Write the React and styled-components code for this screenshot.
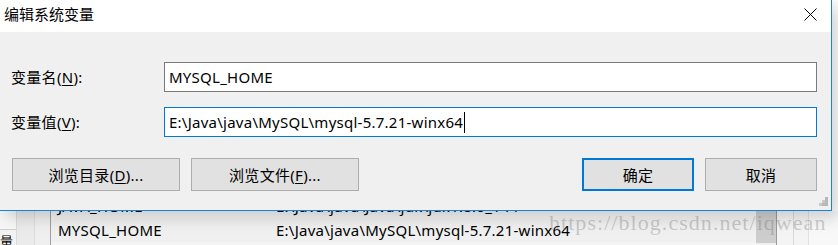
import React from 'react';
import styled, { createGlobalStyle } from 'styled-components';

const GlobalStyle = createGlobalStyle`
  html, body {
    margin: 0;
    padding: 0;
    background: #ffffff;
    overflow: hidden;
  }
`;

const uiFont = `"Noto Sans", "Noto Sans CJK SC", sans-serif`;

const Screen = styled.div`
  width: 838px;
  height: 245px;
  overflow: hidden;
  display: flex;
  flex-direction: column;
  position: relative;
  font-family: ${uiFont};
  color: #000;
`;

const Dialog = styled.div`
  width: 832px;
  height: 211px;
  flex: none;
  display: flex;
  flex-direction: column;
  border-right: 1px solid #1883d7;
  border-bottom: 1px solid #1883d7;
  box-sizing: border-box;
  position: relative;
  z-index: 2;
  box-shadow: 6px 6px 16px rgba(0, 0, 0, 0.18);
`;

const TitleBar = styled.div`
  height: 32px;
  flex: none;
  background: #ffffff;
  display: flex;
  align-items: center;
  justify-content: space-between;
  padding: 0 14px 4px 4px;
  box-sizing: border-box;
`;

const Title = styled.span`
  font-size: 15px;
  line-height: 20px;
`;

const CloseIcon = styled.svg`
  width: 13px;
  height: 13px;
  display: block;
`;

const Body = styled.div`
  flex: 1;
  background: #f0f0f0;
  padding: 30px 14px 0 11px;
  display: flex;
  flex-direction: column;
`;

const Fields = styled.div`
  display: grid;
  grid-template-columns: 153px 1fr;
  row-gap: 15px;
  align-items: center;
`;

const Label = styled.label`
  font-size: 15px;
  line-height: 20px;
  letter-spacing: 0.3px;
  & u {
    text-decoration-thickness: 1px;
    text-underline-offset: 2px;
  }
`;

const Input = styled.div`
  height: 30px;
  box-sizing: border-box;
  background: #ffffff;
  border: 1px solid ${(p) => (p.$focused ? '#0078d7' : '#7a7a7a')};
  padding: 0 4px;
  display: flex;
  align-items: center;
  font-size: 15px;
  letter-spacing: 0.25px;
  white-space: nowrap;
`;

const Caret = styled.span`
  display: inline-block;
  width: 0;
  height: 21px;
  border-left: 1px solid #000;
  margin-left: 1px;
`;

const ButtonRow = styled.div`
  margin-top: 21px;
  padding-left: 1px;
  display: flex;
  gap: 11px;
`;

const Spacer = styled.div`
  flex: 1;
`;

const Button = styled.button`
  width: ${(p) => p.$w}px;
  height: 33px;
  box-sizing: border-box;
  background: #e1e1e1;
  border: ${(p) => (p.$default ? '2px solid #0078d7' : '1px solid #adadad')};
  font-family: ${uiFont};
  font-size: 15px;
  letter-spacing: 0.3px;
  color: #000;
  padding: 0;
  display: flex;
  align-items: center;
  justify-content: center;
  & u {
    text-decoration-thickness: 1px;
    text-underline-offset: 2px;
  }
`;

const Grip = styled.svg`
  position: absolute;
  right: 3px;
  bottom: 4px;
  width: 9px;
  height: 9px;
`;

/* the window behind the dialog */
const Behind = styled.div`
  flex: 1;
  min-height: 0;
  display: flex;
  position: relative;
  background: #ffffff;
`;

const LeftPane = styled.div`
  width: 50px;
  flex: none;
  display: grid;
  grid-template-columns: 17px 18px 15px;
  border-right: 1px solid #a0a0a0;
`;

const PaneCol = styled.div`
  background: ${(p) => p.$bg};
  border-right: 1px solid ${(p) => p.$line || 'transparent'};
  display: flex;
  flex-direction: column;
  overflow: hidden;
`;

const TabBox = styled.div`
  height: 18px;
  flex: none;
  background: #f7f7f7;
  border-bottom: 1px solid #cfcfcf;
`;

const TabText = styled.div`
  font-size: 13px;
  line-height: 13px;
  margin-top: 5px;
  white-space: nowrap;
`;

const List = styled.div`
  flex: 1;
  display: flex;
  flex-direction: column;
  justify-content: flex-end;
  overflow: hidden;
  background: #f4f4f4;
  padding-bottom: 3px;
`;

const Row = styled.div`
  height: 24px;
  flex: none;
  display: grid;
  grid-template-columns: 218px 1fr;
  align-items: center;
  font-size: 15px;
  letter-spacing: 0.25px;
  padding-left: 7px;
  white-space: nowrap;
  background: ${(p) => (p.$alt ? '#f0f0f0' : 'transparent')};
`;

const Scrollbar = styled.div`
  width: 20px;
  flex: none;
  background: #f0f0f0;
  padding-bottom: 2px;
  display: flex;
`;

const Thumb = styled.div`
  flex: 1;
  background: #cdcdcd;
`;

const RightEdge = styled.div`
  width: 61px;
  flex: none;
  display: grid;
  grid-template-columns: 17px 15px 1fr;
  border-left: 1px solid #9a9a9a;
`;

const EdgeCol = styled.div`
  background: ${(p) => p.$bg};
  border-right: 1px solid ${(p) => p.$line || 'transparent'};
`;

const Watermark = styled.div`
  position: absolute;
  left: 549px;
  top: -1px;
  font-family: "Liberation Serif", serif;
  font-size: 22px;
  letter-spacing: 1.05px;
  color: rgba(120, 120, 120, 0.35);
  white-space: nowrap;
  pointer-events: none;
`;

export default function App() {
  return (
    <>
      <GlobalStyle />
      <Screen>
        <Dialog>
          <TitleBar>
            <Title>编辑系统变量</Title>
            <CloseIcon viewBox="0 0 13 13">
              <path d="M0.5 0.5 L12.5 12.5 M12.5 0.5 L0.5 12.5" stroke="#000" strokeWidth="1" fill="none" />
            </CloseIcon>
          </TitleBar>
          <Body>
            <Fields>
              <Label>
                变量名(<u>N</u>):
              </Label>
              <Input>MYSQL_HOME</Input>
              <Label>
                变量值(<u>V</u>):
              </Label>
              <Input $focused>
                E:\Java\java\MySQL\mysql-5.7.21-winx64
                <Caret />
              </Input>
            </Fields>
            <ButtonRow>
              <Button $w={168}>
                浏览目录(<u>D</u>)...
              </Button>
              <Button $w={168}>
                浏览文件(<u>F</u>)...
              </Button>
              <Spacer />
              <Button $w={112} $default>
                确定
              </Button>
              <Button $w={112}>取消</Button>
            </ButtonRow>
          </Body>
          <Grip viewBox="0 0 9 9">
            <rect x="6" y="0" width="3" height="3" fill="#b8b8b8" />
            <rect x="3" y="3" width="3" height="3" fill="#c8c8c8" />
            <rect x="6" y="3" width="3" height="3" fill="#b8b8b8" />
            <rect x="0" y="6" width="3" height="3" fill="#c8c8c8" />
            <rect x="3" y="6" width="3" height="3" fill="#b8b8b8" />
            <rect x="6" y="6" width="3" height="3" fill="#b8b8b8" />
          </Grip>
        </Dialog>
        <Behind>
          <LeftPane>
            <PaneCol $bg="#f3f3f3" $line="#dadada">
              <TabBox />
              <TabText>量</TabText>
            </PaneCol>
            <PaneCol $bg="#ebebeb" $line="#dcdcdc" />
            <PaneCol $bg="#efefef" />
          </LeftPane>
          <List>
            <Row>
              <span>JAVA_HOME</span>
              <span>E:\Java\java\Java\jdk\jdk1.8.0_144</span>
            </Row>
            <Row $alt>
              <span>MYSQL_HOME</span>
              <span>E:\Java\java\MySQL\mysql-5.7.21-winx64</span>
            </Row>
          </List>
          <Scrollbar>
            <Thumb />
          </Scrollbar>
          <RightEdge>
            <EdgeCol $bg="#f4f4f4" $line="#dadada" />
            <EdgeCol $bg="#f4f4f4" $line="#e0e0e0" />
            <EdgeCol $bg="#f8f8f8" />
          </RightEdge>
          <Watermark>https://blog.csdn.net/iqwean</Watermark>
        </Behind>
      </Screen>
    </>
  );
}
